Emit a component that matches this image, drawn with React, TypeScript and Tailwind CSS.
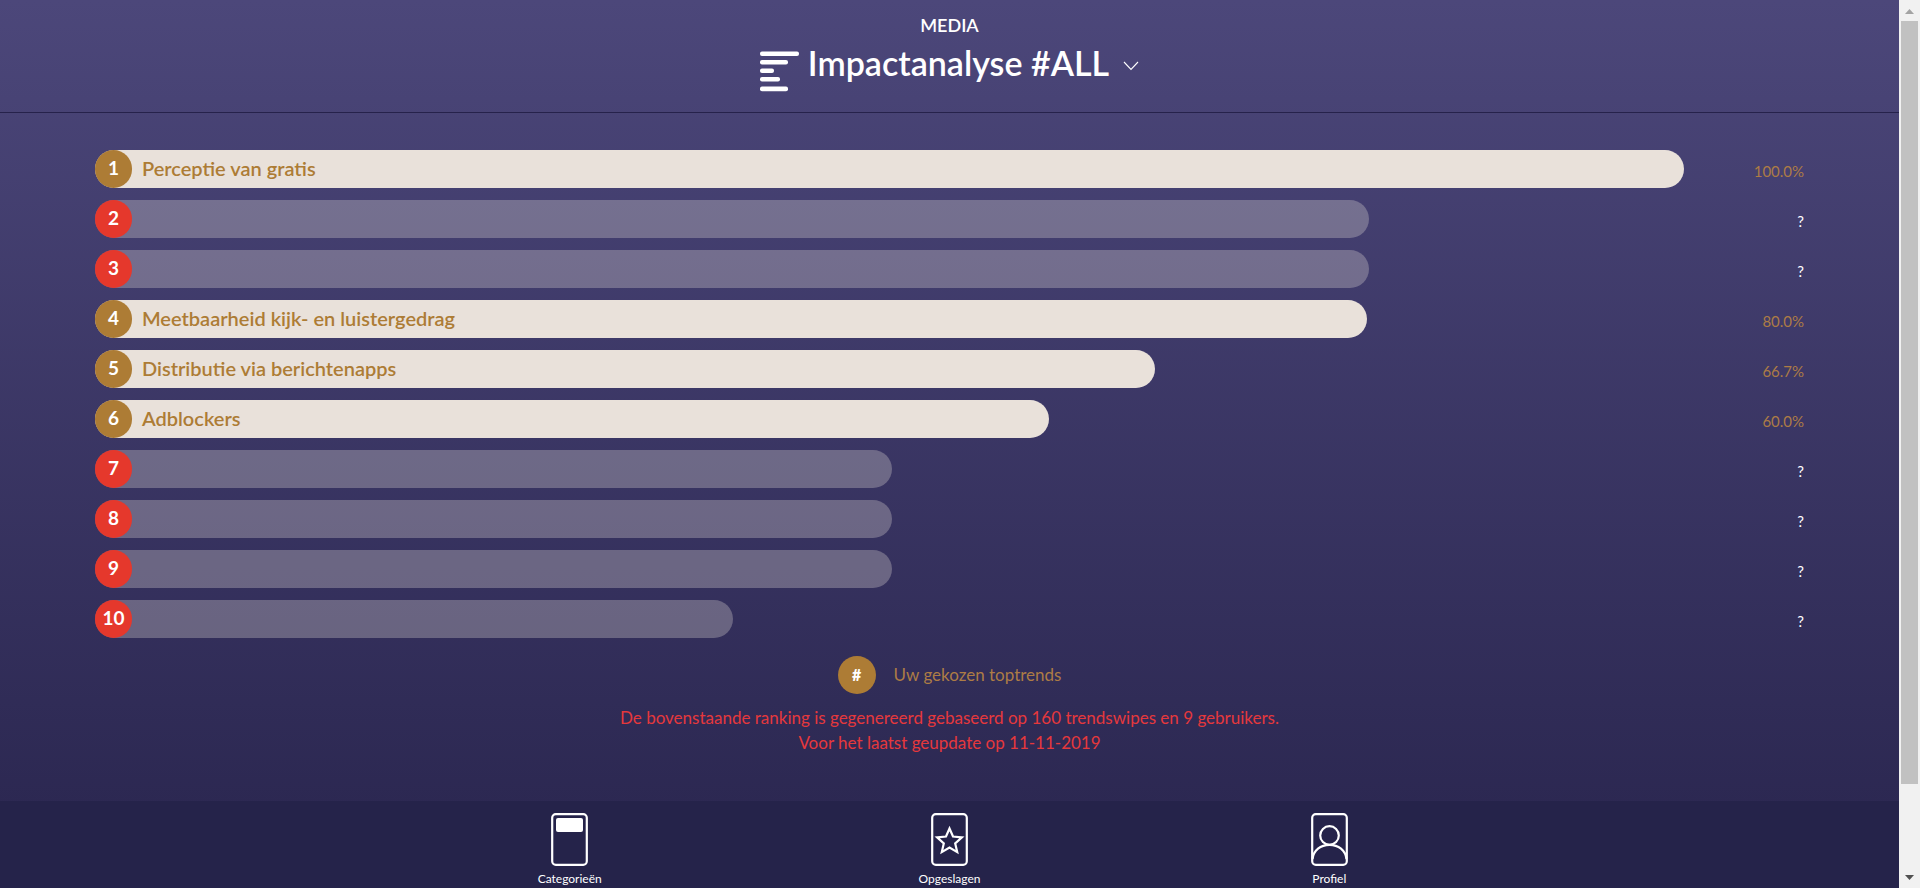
import type { ReactNode } from "react";

type Trend = { name?: string; width: number; score?: string };

const trends: Trend[] = [
  { name: "Perceptie van gratis", width: 100, score: "100.0%" },
  { width: 80.15 },
  { width: 80.15 },
  { name: "Meetbaarheid kijk- en luistergedrag", width: 80, score: "80.0%" },
  { name: "Distributie via berichtenapps", width: 66.7, score: "66.7%" },
  { name: "Adblockers", width: 60, score: "60.0%" },
  { width: 50.15 },
  { width: 50.15 },
  { width: 50.15 },
  { width: 40.15 },
];

function RankingIcon() {
  return (
    <svg width="40" height="41" viewBox="0 0 40 41" fill="#fff" aria-hidden="true">
      <rect x="0" y="0.5" width="39" height="4.6" rx="2" />
      <rect x="0" y="9" width="28" height="4.6" rx="2" />
      <rect x="0" y="17.5" width="14" height="4.6" rx="2" />
      <rect x="0" y="26" width="20" height="4.6" rx="2" />
      <rect x="0" y="35.5" width="28" height="4.8" rx="2" />
    </svg>
  );
}

function Chevron() {
  return (
    <svg width="16" height="10" viewBox="0 0 16 10" fill="none" stroke="#fff" strokeWidth="1.1" aria-hidden="true">
      <path d="M1 1l7 7.5L15 1" />
    </svg>
  );
}

function Card({ children }: { children: ReactNode }) {
  return (
    <svg width="37" height="53" viewBox="0 0 37 53" fill="none" stroke="#fff" strokeWidth="2.2" aria-hidden="true">
      <rect x="1.2" y="1.2" width="34.6" height="50.6" rx="3.6" />
      {children}
    </svg>
  );
}

function NavItem({ label, children }: { label: string; children: ReactNode }) {
  return (
    <a href="#" className="flex w-1/5 flex-col items-center text-xs leading-4 text-white">
      <Card>{children}</Card>
      <span className="mt-[5px]">{label}</span>
    </a>
  );
}

function Row({ trend, rank }: { trend: Trend; rank: number }) {
  const chosen = Boolean(trend.name);
  return (
    <li className="flex h-[38px] items-center">
      <div className="h-full w-[93%]">
        <div
          className={
            chosen
              ? "flex h-full items-center rounded-full bg-[#e9e1da]"
              : "flex h-full items-center rounded-full bg-[#e9e1da]/30"
          }
          style={{ width: `${trend.width}%` }}
        >
          <span
            className={
              chosen
                ? "flex h-full w-[37px] shrink-0 items-center justify-center rounded-full bg-[#ad7c35] pb-0.5 text-[19px] font-bold text-white"
                : "flex h-full w-[37px] shrink-0 items-center justify-center rounded-full bg-[#e5382c] pb-0.5 text-[19px] font-bold text-white"
            }
          >
            {rank}
          </span>
          {chosen && (
            <span className="whitespace-nowrap pb-[3px] pl-2.5 text-xl font-semibold text-[#ad7c35]">{trend.name}</span>
          )}
        </div>
      </div>
      <span
        className={
          chosen
            ? "flex-1 pt-1 text-right text-[15px] text-[#ad7c45]"
            : "flex-1 pt-1 text-right text-[15px] text-white"
        }
      >
        {trend.score ?? "?"}
      </span>
    </li>
  );
}

export default function App() {
  return (
    <div className="flex min-h-screen font-['Lato',sans-serif]">
      <div className="flex min-w-0 flex-1 flex-col bg-linear-to-b from-[#4c477a] to-[#29254e]">
        <header className="flex h-[113px] flex-col items-center border-b border-[#26224b] pt-[13px] text-white">
          <p className="text-lg font-semibold leading-6">MEDIA</p>
          <button type="button" className="mt-1 flex items-start">
            <span className="pt-2.5">
              <RankingIcon />
            </span>
            <h1 className="ml-2 text-[34px] font-semibold leading-[44px]">Impactanalyse #ALL</h1>
            <span className="ml-3.5 pt-5">
              <Chevron />
            </span>
          </button>
        </header>

        <main className="px-[5%] pt-[37px]">
          <ol className="flex flex-col gap-3">
            {trends.map((trend, i) => (
              <Row key={i} trend={trend} rank={i + 1} />
            ))}
          </ol>

          <div className="mt-[18px] flex items-center justify-center">
            <span className="flex size-[38px] items-center justify-center rounded-full bg-[#ad7c35] text-base font-black text-white">
              #
            </span>
            <span className="ml-[18px] text-[17px] text-[#ad7c45]">Uw gekozen toptrends</span>
          </div>

          <p className="mt-[11px] text-center text-[17px] leading-[25px] text-[#e5383c]">
            De bovenstaande ranking is gegenereerd gebaseerd op 160 trendswipes en 9 gebruikers.
            <br />
            Voor het laatst geupdate op 11-11-2019
          </p>
        </main>

        <nav className="mt-auto flex h-[87px] justify-center bg-[#25234a] pt-3">
          <NavItem label="Categorieën">
            <rect x="5" y="5" width="27" height="14" rx="2" fill="#fff" stroke="none" />
          </NavItem>
          <NavItem label="Opgeslagen">
            <path d="M18.5 15.5l3.5 8 8.9.9-6.700 6 2 8.700-7.700-4.600-7.700 4.600 2-8.700-6.700-6 8.900-.9z" />
          </NavItem>
          <NavItem label="Profiel">
            <circle cx="18.5" cy="22.5" r="9.3" />
            <path d="M1.5 46c1-8.500 8-14.200 17-14.200S34.500 37.500 35.500 46" />
          </NavItem>
        </nav>
      </div>

      <div className="flex w-[21px] flex-col items-center bg-[#f1f1f1]" aria-hidden="true">
        <svg width="9" height="21" viewBox="0 0 9 21" fill="#a3a3a3">
          <path d="M0 14l4.500-5L9 14z" />
        </svg>
        <div className="w-[17px] flex-1 bg-[#c1c1c1]" />
        <svg width="9" height="104" viewBox="0 0 9 104" fill="#505050">
          <path d="M0 91l4.500 5L9 91z" />
        </svg>
      </div>
    </div>
  );
}
